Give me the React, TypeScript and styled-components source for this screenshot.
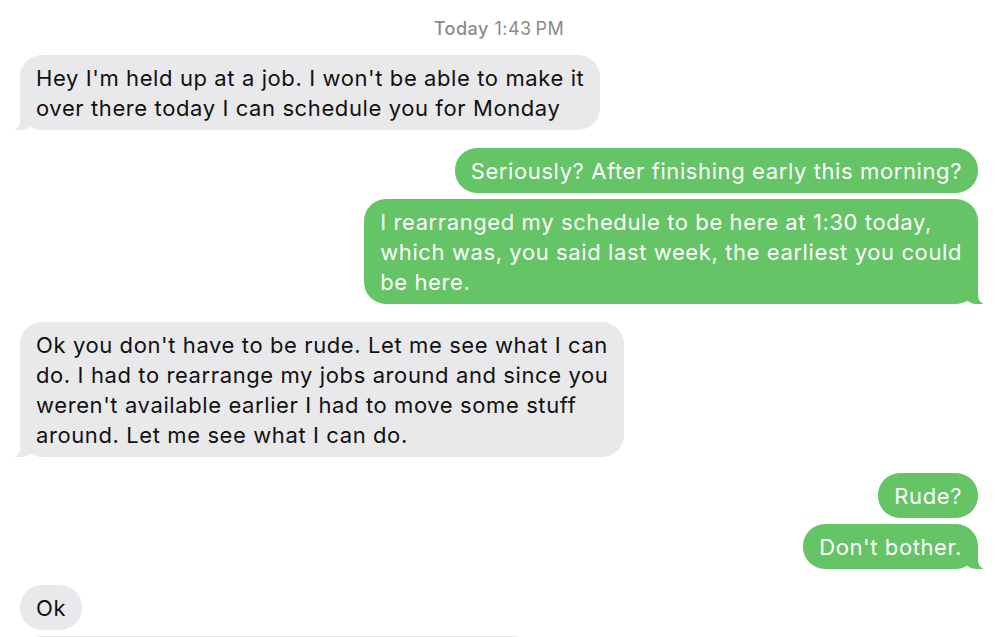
import React from 'react';
import styled, { createGlobalStyle, css } from 'styled-components';

const GlobalStyle = createGlobalStyle`
  html, body {
    margin: 0;
    padding: 0;
    background: #ffffff;
  }
  body {
    font-family: Inter, "Liberation Sans", Arial, sans-serif;
    -webkit-font-smoothing: antialiased;
  }
`;

const Thread = styled.div`
  display: flex;
  flex-direction: column;
  padding: 16px 22px 0 20px;
  height: 637px;
  box-sizing: border-box;
  overflow: hidden;
`;

const Stamp = styled.div`
  text-align: center;
  font-size: 18px;
  line-height: 26px;
  letter-spacing: 0.5px;
  color: #8a8a8e;
  margin-bottom: 13px;
  b {
    font-weight: 500;
  }
`;

type BubbleProps = { $mine?: boolean; $tail?: boolean; $gap?: number };

const Bubble = styled.div<BubbleProps>`
  position: relative;
  align-self: ${({ $mine }) => ($mine ? 'flex-end' : 'flex-start')};
  margin-top: ${({ $gap }) => $gap ?? 0}px;
  padding: 8px 16px 7px;
  border-radius: 22px;
  font-size: 22px;
  line-height: 30px;
  letter-spacing: 0.6px;
  white-space: nowrap;
  background: ${({ $mine }) => ($mine ? '#65c466' : '#e9e9eb')};
  color: ${({ $mine }) => ($mine ? '#ffffff' : '#111111')};

  ${({ $tail, $mine }) =>
    $tail &&
    ($mine
      ? css`
          &::before {
            content: '';
            position: absolute;
            bottom: 0;
            right: -5px;
            width: 20px;
            height: 20px;
            background: #65c466;
            border-bottom-left-radius: 14px 12px;
          }
          &::after {
            content: '';
            position: absolute;
            bottom: 0;
            right: -12px;
            width: 12px;
            height: 20px;
            background: #ffffff;
            border-bottom-left-radius: 8px;
          }
        `
      : css`
          &::before {
            content: '';
            position: absolute;
            bottom: 0;
            left: -5px;
            width: 20px;
            height: 20px;
            background: #e9e9eb;
            border-bottom-right-radius: 14px 12px;
          }
          &::after {
            content: '';
            position: absolute;
            bottom: 0;
            left: -12px;
            width: 12px;
            height: 20px;
            background: #ffffff;
            border-bottom-right-radius: 8px;
          }
        `)}
`;

const Line = styled.span`
  display: block;
  position: relative;
  z-index: 1;
`;

const Stub = styled.div`
  align-self: flex-start;
  margin-top: 6px;
  width: 515px;
  height: 45px;
  border-radius: 22px;
  background: #e9e9eb;
  flex-shrink: 0;
`;

type Msg = { mine?: boolean; tail?: boolean; gap: number; lines: string[] };

const messages: Msg[] = [
  {
    gap: 0,
    tail: true,
    lines: [
      "Hey I'm held up at a job. I won't be able to make it",
      'over there today I can schedule you for Monday',
    ],
  },
  { mine: true, gap: 18, lines: ['Seriously? After finishing early this morning?'] },
  {
    mine: true,
    tail: true,
    gap: 6,
    lines: [
      'I rearranged my schedule to be here at 1:30 today,',
      'which was, you said last week, the earliest you could',
      'be here.',
    ],
  },
  {
    gap: 18,
    tail: true,
    lines: [
      "Ok you don't have to be rude. Let me see what I can",
      'do. I had to rearrange my jobs around and since you',
      "weren't available earlier I had to move some stuff",
      'around. Let me see what I can do.',
    ],
  },
  { mine: true, gap: 16, lines: ['Rude?'] },
  { mine: true, tail: true, gap: 6, lines: ["Don't bother."] },
  { gap: 16, lines: ['Ok'] },
];

export default function App() {
  return (
    <>
      <GlobalStyle />
      <Thread>
        <Stamp>
          <b>Today</b> 1:43{'\u2009'}PM
        </Stamp>
        {messages.map((m, i) => (
          <Bubble key={i} $mine={m.mine} $tail={m.tail} $gap={m.gap}>
            {m.lines.map((l, j) => (
              <Line key={j}>{l}</Line>
            ))}
          </Bubble>
        ))}
        <Stub />
      </Thread>
    </>
  );
}
